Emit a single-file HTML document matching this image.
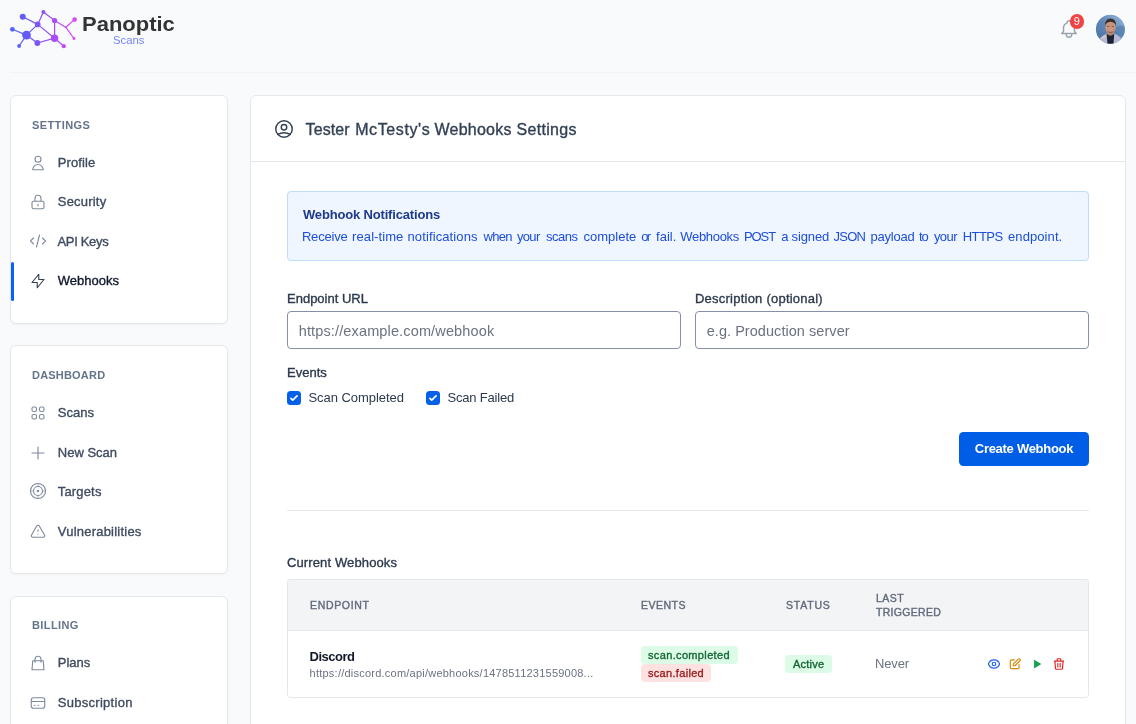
<!DOCTYPE html>
<html lang="en">
<head>
<meta charset="utf-8">
<title>Webhooks Settings</title>
<style>
*{box-sizing:border-box}
html,body{margin:0;padding:0}
body{will-change:transform;width:1136px;height:724px;overflow:hidden;background:#f8fafc;font-family:"Liberation Sans",sans-serif;font-size:13px;color:#374151;position:relative}
.abs{position:absolute}
.med{-webkit-text-stroke:.35px currentColor}
/* header */
#hdr{position:absolute;left:0;top:0;width:1136px;height:73px}
#hdr:after{content:"";position:absolute;left:10px;top:72px;width:1126px;height:1px;background:#f1f3f6}
#logo{position:absolute;left:0;top:0}
#brand{position:absolute;left:81.5px;top:13.4px;font-size:19.3px;font-weight:700;color:#333;line-height:24px;transform:scaleX(1.14);transform-origin:0 0;white-space:nowrap}
#brand2{position:absolute;left:112.7px;top:35px;font-size:10.2px;color:#7686f8;line-height:12px;white-space:nowrap;transform:scaleX(1.11);transform-origin:0 0}
/* sidebar */
.card{position:absolute;left:10px;width:218px;background:#fff;border:1px solid #e5e7eb;border-radius:6px;box-shadow:0 1px 2px rgba(0,0,0,.04)}
.card h4{position:absolute;left:21px;top:22px;margin:0;font-size:11px;line-height:14px;font-weight:700;color:#64748b;white-space:nowrap}
.nav{position:absolute;left:0;top:47px;width:216px}
.nav a{display:block;position:absolute;left:0;width:216px;height:39.33px;line-height:39.33px;padding-left:46.8px;color:#3f4b5f;font-size:13px;white-space:nowrap;text-decoration:none}
.ic{fill:none;stroke:currentColor;stroke-width:1.5;stroke-linecap:round;stroke-linejoin:round}
.nav a svg{position:absolute;left:18px;top:10.67px;width:18px;height:18px;color:#7f8a9e}
.nav a.on{color:#0f172a}
.nav a.on svg{color:#334155}
.nav a.on:before{content:"";position:absolute;left:0;top:1.1px;width:3px;height:38.7px;background:#0561fc;border-radius:1.5px}
/* main */
#main{position:absolute;left:250px;top:95px;width:876px;height:700px;background:#fff;border:1px solid #e5e7eb;border-radius:6px;box-shadow:0 1px 2px rgba(0,0,0,.04)}
#mh{position:absolute;left:0;top:0;width:874px;height:66px;border-bottom:1px solid #e5e7eb}
#title{position:absolute;left:55px;top:23px;font-size:16px;line-height:22px;color:#334155;white-space:nowrap;letter-spacing:.33px}
#info{position:absolute;left:36px;top:95px;width:802px;height:70px;background:#eff6ff;border:1px solid #bfdbfe;border-radius:4px}
#info b{position:absolute;left:15px;top:13px;line-height:20px;font-size:13px;color:#1e3a8a;white-space:nowrap;letter-spacing:-.17px}
#info span{position:absolute;left:14.5px;top:35px;line-height:20px;font-size:13px;color:#1d4ed8;white-space:nowrap}
.wl{position:absolute;left:0;white-space:nowrap}
.wl i{position:absolute;top:0;font-style:normal}
.lbl{position:absolute;font-size:13px;line-height:16px;color:#2d394d;white-space:nowrap}
.inp{position:absolute;top:215px;width:394px;height:38px;border:1px solid #8490a5;border-radius:4px;background:#fff;font-size:14.5px;line-height:38px;padding-left:10.7px;color:#6b7280;white-space:nowrap}
.cb{position:absolute;top:295px;width:14px;height:14px;border-radius:3.5px;background:#0560e8}
#btn{position:absolute;left:708px;top:336px;width:130px;height:34px;border-radius:4.5px;background:#005ee6;color:#fff;font-weight:700;font-size:13px;line-height:34px;text-align:center;letter-spacing:-.28px}
#hr{position:absolute;left:36px;top:414px;width:802px;height:1px;background:#e5e7eb}
#tbl{position:absolute;left:36px;top:483px;width:802px;height:119px;border:1px solid #e5e7eb;border-radius:3px;overflow:hidden;background:#fff}
#th{position:absolute;left:0;top:0;width:800px;height:51px;background:#f3f4f6;border-bottom:1px solid #e5e7eb}
.th{position:absolute;font-size:10.5px;line-height:14px;color:#626b7b;white-space:nowrap;-webkit-text-stroke:.4px currentColor}
.bdg{position:absolute;height:18px;border-radius:4px;font-size:11px;line-height:18px;padding-left:7px;white-space:nowrap}
.g{background:#dcfce7;color:#166534}
.r{background:#fee2e2;color:#991b1b}
</style>
</head>
<body>
<svg width="0" height="0" style="position:absolute"><defs>
<symbol id="i-user" viewBox="0 0 24 24"><path d="M16 7a4 4 0 11-8 0 4 4 0 018 0zM12 14a7 7 0 00-7 7h14a7 7 0 00-7-7z"/></symbol>
<symbol id="i-lock" viewBox="0 0 24 24"><path d="M12 15v2m-6 4h12a2 2 0 002-2v-6a2 2 0 00-2-2H6a2 2 0 00-2 2v6a2 2 0 002 2zm10-10V7a4 4 0 00-8 0v4h8z"/></symbol>
<symbol id="i-code" viewBox="0 0 24 24"><path d="M10 20l4-16m4 4l4 4-4 4M6 16l-4-4 4-4"/></symbol>
<symbol id="i-bolt" viewBox="0 0 24 24"><path d="M13 10V3L4 14h7v7l9-11h-7z"/></symbol>
<symbol id="i-grid" viewBox="0 0 24 24"><path d="M4 6a2 2 0 012-2h2a2 2 0 012 2v2a2 2 0 01-2 2H6a2 2 0 01-2-2V6zM14 6a2 2 0 012-2h2a2 2 0 012 2v2a2 2 0 01-2 2h-2a2 2 0 01-2-2V6zM4 16a2 2 0 012-2h2a2 2 0 012 2v2a2 2 0 01-2 2H6a2 2 0 01-2-2v-2zM14 16a2 2 0 012-2h2a2 2 0 012 2v2a2 2 0 01-2 2h-2a2 2 0 01-2-2v-2z"/></symbol>
<symbol id="i-plus" viewBox="0 0 24 24"><path d="M12 4v16m8-8H4"/></symbol>
<symbol id="i-target" viewBox="0 0 24 24"><circle cx="12" cy="12" r="10"/><circle cx="12" cy="12" r="6"/><circle cx="12" cy="12" r=".9" fill="currentColor"/><path d="M12 2v4M12 18v4M2 12h4M18 12h4" stroke-opacity=".55"/></symbol>
<symbol id="i-warn" viewBox="0 0 24 24"><path d="M12 9v2m0 4h.01m-6.938 4h13.856c1.54 0 2.502-1.667 1.732-3L13.732 4c-.77-1.333-2.694-1.333-3.464 0L3.34 16c-.77 1.333.192 3 1.732 3z"/></symbol>
<symbol id="i-bag" viewBox="0 0 24 24"><path d="M16 11V7a4 4 0 00-8 0v4M5 9h14l1 12H4L5 9z"/></symbol>
<symbol id="i-card" viewBox="0 0 24 24"><path d="M3 10h18M7 15h1m4 0h1m-7 4h12a3 3 0 003-3V8a3 3 0 00-3-3H6a3 3 0 00-3 3v8a3 3 0 003 3z"/></symbol>
<symbol id="i-uc" viewBox="0 0 24 24"><path d="M5.121 17.804A13.937 13.937 0 0112 16c2.5 0 4.847.655 6.879 1.804M15 10a3 3 0 11-6 0 3 3 0 016 0zm6 2a9 9 0 11-18 0 9 9 0 0118 0z"/></symbol>
<symbol id="i-bell" viewBox="0 0 24 24"><path d="M15 17h5l-1.405-1.405A2.032 2.032 0 0118 14.158V11a6.002 6.002 0 00-4-5.659V5a2 2 0 10-4 0v.341C7.67 6.165 6 8.388 6 11v3.159c0 .538-.214 1.055-.595 1.436L4 17h5m6 0v1a3 3 0 11-6 0v-1m6 0H9"/></symbol>
<symbol id="i-eye" viewBox="0 0 24 24"><path d="M15 12a3 3 0 11-6 0 3 3 0 016 0z"/><path d="M2.458 12C3.732 7.943 7.523 5 12 5c4.478 0 8.268 2.943 9.542 7-1.274 4.057-5.064 7-9.542 7-4.477 0-8.268-2.943-9.542-7z"/></symbol>
<symbol id="i-edit" viewBox="0 0 24 24"><path d="M11 5H6a2 2 0 00-2 2v11a2 2 0 002 2h11a2 2 0 002-2v-5m-1.414-9.414a2 2 0 112.828 2.828L11.828 15H9v-2.828l8.586-8.586z"/></symbol>
<symbol id="i-trash" viewBox="0 0 24 24"><path d="M19 7l-.867 12.142A2 2 0 0116.138 21H7.862a2 2 0 01-1.995-1.858L5 7m5 4v6m4-6v6m1-10V4a1 1 0 00-1-1h-4a1 1 0 00-1 1v3M4 7h16"/></symbol>
</defs></svg>

<div id="hdr">
  <svg id="logo" width="90" height="60" viewBox="0 0 90 60"><defs><linearGradient id="lg" gradientUnits="userSpaceOnUse" x1="10" y1="0" x2="77" y2="0"><stop offset="0" stop-color="#4f66f8"/><stop offset=".3" stop-color="#6a58f6"/><stop offset=".65" stop-color="#a84df5"/><stop offset="1" stop-color="#e344f6"/></linearGradient></defs><g stroke="url(#lg)" stroke-width="1.2" stroke-linecap="round" fill="none"><path d="M22.75 16.83L37.7 24.4"/><path d="M12.4 29.3L26.5 35.1"/><path d="M26.5 35.1L19.1 46.0"/><path d="M26.5 35.1L37.7 24.4"/><path d="M26.5 35.1L37.4 43.0"/><path d="M37.4 43.0L54.6 38.2"/><path d="M37.7 24.4L43.4 11.9"/><path d="M43.4 11.9L54.6 20.5"/><path d="M54.6 20.5L54.6 38.2"/><path d="M37.7 24.4L54.6 38.2"/><path d="M54.6 38.2L63.8 46.2"/><path d="M54.6 20.5L65.7 27.2"/><path d="M65.7 27.2L74.6 19.6"/><path d="M65.7 27.2L74.0 38.5"/></g><g fill="url(#lg)"><circle cx="22.75" cy="16.83" r="3.0"/><circle cx="12.4" cy="29.3" r="2.4"/><circle cx="26.5" cy="35.1" r="4.4"/><circle cx="19.1" cy="46.0" r="1.9"/><circle cx="37.7" cy="24.4" r="2.8"/><circle cx="37.4" cy="43.0" r="2.9"/><circle cx="43.4" cy="11.9" r="2.0"/><circle cx="54.6" cy="20.5" r="2.6"/><circle cx="54.6" cy="38.2" r="3.7"/><circle cx="63.8" cy="46.2" r="2.1"/><circle cx="74.6" cy="19.6" r="2.3"/><circle cx="74.0" cy="38.5" r="1.4"/></g></svg>
  <div id="brand">Panoptic</div>
  <div id="brand2">Scans</div>
  <svg class="ic abs" style="left:1058.3px;top:18.3px;width:22px;height:22px;color:#9ca3af;stroke-width:1.6"><use href="#i-bell"/></svg>
  <div class="abs" style="left:1069.6px;top:14.2px;width:14.4px;height:14.4px;border-radius:50%;background:#ef4444;color:#fff;font-size:11px;line-height:14.4px;text-align:center">9</div>
  <svg class="abs" style="left:1095px;top:14px" width="31" height="31" viewBox="0 0 31 31"><defs><clipPath id="av"><circle cx="15.4" cy="15.3" r="14.5"/></clipPath><linearGradient id="avg" x1="0" y1="1" x2="1" y2="0"><stop offset="0" stop-color="#4a6f9b"/><stop offset=".5" stop-color="#5f89ba"/><stop offset="1" stop-color="#9dbddd"/></linearGradient></defs>
   <circle cx="15.4" cy="15.3" r="15.1" fill="#fff"/>
   <g clip-path="url(#av)"><rect width="31" height="31" fill="url(#avg)"/>
    <path d="M0 22 Q6 17 10 19 T19 15 T31 13 V22Z" fill="#4a76a8" opacity=".55"/>
    <path d="M2 31 L4.5 25 Q9 20.5 12 19.5 L19 19.5 Q23 20.5 26.5 25 L29 31Z" fill="#b7b9d3"/>
    <path d="M4.5 25 Q8 21.5 11 20.3 L12 23Z" fill="#d9c9c4" opacity=".8"/>
    <path d="M11.6 20 L19.2 20 L18.4 31 L12.6 31Z" fill="#1b2233"/>
    <path d="M12.4 17 h6 v3.6 q-3 2.2 -6 0z" fill="#b9826c"/>
    <ellipse cx="15.5" cy="13.4" rx="5.2" ry="6.6" fill="#c9957f"/>
    <path d="M10.1 12 Q9.6 4.4 15.5 4.4 Q21.4 4.4 20.9 12 Q20.2 8 15.5 7.7 Q10.8 8 10.1 12Z" fill="#3b302b"/>
    <path d="M11.2 16.2 Q15.5 22.6 19.8 16.2 Q15.5 19.2 11.2 16.2Z" fill="#7d5446" opacity=".7"/>
    <path d="M12 12.4h2.4M16.6 12.4h2.4" stroke="#5a3b32" stroke-width=".9" opacity=".7"/>
   </g></svg>
</div>

<div class="card" style="top:95px;height:229px">
  <h4 style="letter-spacing:.4px">SETTINGS</h4>
  <div class="nav">
    <a class="med" style="top:0px;letter-spacing:.08px"><svg class="ic"><use href="#i-user"/></svg>Profile</a>
    <a class="med" style="top:39.33px;letter-spacing:.2px"><svg class="ic"><use href="#i-lock"/></svg>Security</a>
    <a class="med" style="top:78.67px;letter-spacing:-.33px;text-indent:-.3px"><svg class="ic"><use href="#i-code"/></svg>API Keys</a>
    <a class="med on" style="top:118px;"><svg class="ic"><use href="#i-bolt"/></svg>Webhooks</a>
  </div>
</div>

<div class="card" style="top:345px;height:229px">
  <h4 style="letter-spacing:.2px">DASHBOARD</h4>
  <div class="nav">
    <a class="med" style="top:0px;"><svg class="ic"><use href="#i-grid"/></svg>Scans</a>
    <a class="med" style="top:40.33px;"><svg class="ic"><use href="#i-plus"/></svg>New Scan</a>
    <a class="med" style="top:78.67px;letter-spacing:.16px"><svg class="ic"><use href="#i-target"/></svg>Targets</a>
    <a class="med" style="top:119px;letter-spacing:.22px"><svg class="ic"><use href="#i-warn"/></svg>Vulnerabilities</a>
  </div>
</div>

<div class="card" style="top:596px;height:229px">
  <h4 style="letter-spacing:.4px;top:21px">BILLING</h4>
  <div class="nav" style="top:46px">
    <a class="med" style="top:0px;"><svg class="ic"><use href="#i-bag"/></svg>Plans</a>
    <a class="med" style="top:40.33px;letter-spacing:.28px"><svg class="ic"><use href="#i-card"/></svg>Subscription</a>
  </div>
</div>

<div id="main">
  <div id="mh">
    <svg class="ic abs" style="left:22px;top:22px;width:22px;height:22px;color:#334155;stroke-width:1.6"><use href="#i-uc"/></svg>
    <div class="wl med" style="top:23px;line-height:22px;font-size:16px;color:#334155"><i style="left:54.60px;letter-spacing:0.092px">Tester</i><i style="left:104.20px;letter-spacing:0.597px">McTesty's</i><i style="left:183.50px;letter-spacing:0.228px">Webhooks</i><i style="left:265.50px;letter-spacing:0.312px">Settings</i></div>
  </div>
  <div id="info">
    <b>Webhook Notifications</b>
    <div class="wl" style="top:35px;line-height:20px;font-size:13px;color:#1d4ed8"><i style="left:13.90px;letter-spacing:-0.189px">Receive</i><i style="left:64.10px;letter-spacing:0.083px">real-time</i><i style="left:119.50px;letter-spacing:0.113px">notifications</i><i style="left:195.50px;letter-spacing:-0.683px">when</i><i style="left:228.90px;letter-spacing:-0.653px">your</i><i style="left:258.00px;letter-spacing:-0.490px">scans</i><i style="left:295.50px;letter-spacing:0.012px">complete</i><i style="left:353.20px;letter-spacing:-1.730px">or</i><i style="left:368.00px;letter-spacing:0.020px">fail.</i><i style="left:392.30px;letter-spacing:-0.312px">Webhooks</i><i style="left:455.90px;letter-spacing:-1.051px">POST</i><i style="left:493.20px;letter-spacing:0.000px">a</i><i style="left:503.60px;letter-spacing:-0.136px">signed</i><i style="left:545.60px;letter-spacing:-0.794px">JSON</i><i style="left:582.60px;letter-spacing:-0.235px">payload</i><i style="left:631.10px;letter-spacing:-1.112px">to</i><i style="left:645.90px;letter-spacing:-0.553px">your</i><i style="left:674.80px;letter-spacing:-0.585px">HTTPS</i><i style="left:720.00px;letter-spacing:0.090px">endpoint.</i></div>
  </div>
  <div class="lbl med" style="left:36px;top:195px">Endpoint URL</div>
  <div class="lbl med" style="left:444px;top:195px;letter-spacing:.23px">Description (optional)</div>
  <div class="inp" style="left:36px;letter-spacing:.14px">https://example.com/webhook</div>
  <div class="inp" style="left:444px;letter-spacing:.05px">e.g. Production server</div>
  <div class="lbl med" style="left:36px;top:269px">Events</div>
  <div class="cb" style="left:36px"><svg viewBox="0 0 16 16" width="14" height="14" style="display:block"><path d="M12.207 4.793a1 1 0 010 1.414l-5 5a1 1 0 01-1.414 0l-2-2a1 1 0 011.414-1.414L6.5 9.086l4.293-4.293a1 1 0 011.414 0z" fill="#fff"/></svg></div>
  <div class="lbl" style="left:57.5px;top:294px;letter-spacing:-.05px">Scan Completed</div>
  <div class="cb" style="left:175px"><svg viewBox="0 0 16 16" width="14" height="14" style="display:block"><path d="M12.207 4.793a1 1 0 010 1.414l-5 5a1 1 0 01-1.414 0l-2-2a1 1 0 011.414-1.414L6.5 9.086l4.293-4.293a1 1 0 011.414 0z" fill="#fff"/></svg></div>
  <div class="lbl" style="left:196.5px;top:294px;letter-spacing:-.2px">Scan Failed</div>
  <div id="btn">Create Webhook</div>
  <div id="hr"></div>
  <div class="lbl med" style="left:36px;top:459px;letter-spacing:.12px">Current Webhooks</div>
  <div id="tbl">
    <div id="th">
      <div class="th" style="left:22px;top:18px;letter-spacing:.66px">ENDPOINT</div>
      <div class="th" style="left:353px;top:18px;letter-spacing:.48px">EVENTS</div>
      <div class="th" style="left:498px;top:18px;letter-spacing:.8px">STATUS</div>
      <div class="th" style="left:588px;top:11px;letter-spacing:.5px">LAST<br><span style="letter-spacing:.3px">TRIGGERED</span></div>
    </div>
    <div class="abs" style="left:21.5px;top:69px;font-size:13px;font-weight:700;color:#111827;line-height:16px;letter-spacing:-.5px">Discord</div>
    <div class="abs" style="left:21.6px;top:86px;font-size:11px;color:#6b7280;line-height:14px;letter-spacing:.23px;white-space:nowrap">https://discord.com/api/webhooks/1478511231559008...</div>
    <div class="bdg g med" style="left:353px;top:66px;width:97px;letter-spacing:.35px">scan.completed</div>
    <div class="bdg r med" style="left:353px;top:84px;width:70px;letter-spacing:.31px">scan.failed</div>
    <div class="bdg g med" style="left:497px;top:75px;width:47px;padding-left:8px;letter-spacing:.24px">Active</div>
    <div class="abs" style="left:587px;top:76px;font-size:13px;color:#6b7280;line-height:16px;letter-spacing:-.14px">Never</div>
    <svg class="ic abs" style="left:698.8px;top:77px;width:14px;height:14px;color:#2563eb;stroke-width:2"><use href="#i-eye"/></svg>
    <svg class="ic abs" style="left:719.9px;top:77px;width:14px;height:14px;color:#d18a0a;stroke-width:2"><use href="#i-edit"/></svg>
    <svg class="abs" style="left:742.4px;top:77px;width:14px;height:14px" viewBox="0 0 24 24"><path d="M7 4.5v15l12.5-7.5z" fill="#16a34a"/></svg>
    <svg class="ic abs" style="left:764.3px;top:77px;width:14px;height:14px;color:#dc2626;stroke-width:2"><use href="#i-trash"/></svg>
  </div>
</div>

</body>
</html>
